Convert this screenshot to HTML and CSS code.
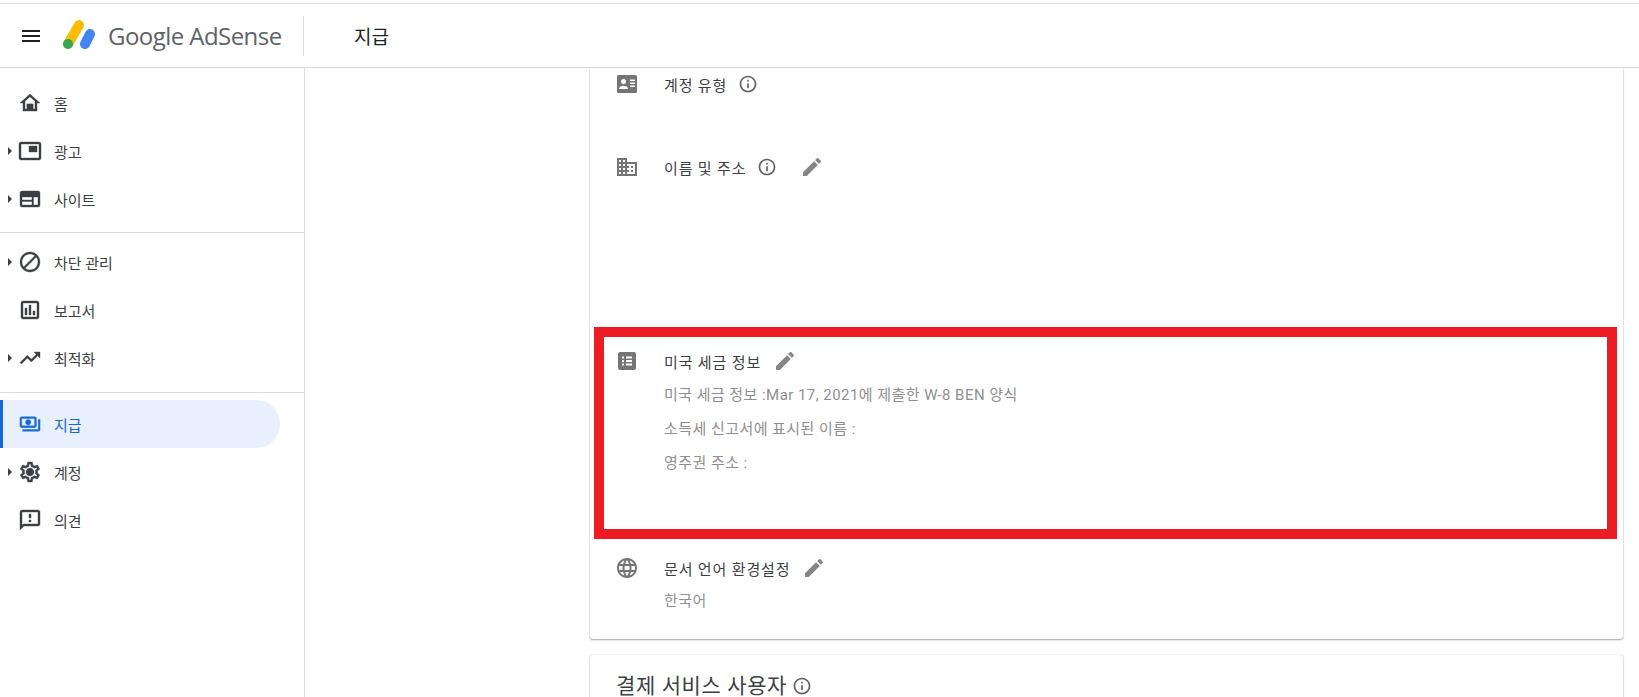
FILE: index.html
```html
<!DOCTYPE html><html lang="ko">
<head>
  <meta charset="UTF-8">
  <meta name="viewport" content="width=device-width, initial-scale=1.0">
  <title>지급 - Google AdSense</title>
  <link rel="stylesheet" href="styles.css">
</head>
<body>
  <header class="topbar">
    <svg class="menu" viewBox="0 0 18 12"><path d="M0 0h18v2H0zM0 5h18v2H0zM0 10h18v2H0z"/></svg>
    <svg class="logo" viewBox="0 0 32 29">
      <path d="M5 24L16 5" stroke="#fbbc04" stroke-width="10" stroke-linecap="round" fill="none"/>
      <path d="M22 24L27 14" stroke="#4285f4" stroke-width="10" stroke-linecap="round" fill="none"/>
      <circle cx="5" cy="24" r="5" fill="#34a853"/>
    </svg>
    <span class="brand">Google AdSense</span>
    <span class="page-title">지급</span>
  </header>

  <div class="layout">
    <nav class="sidebar">
      <div class="nav-group">
        <a class="nav-item"><svg viewBox="0 0 24 24"><path d="M12 5.69l5 4.5V18h-2v-5H9v5H7v-7.81l5-4.5M12 3L2 12h3v8h14v-8h3L12 3z"/><path d="M9 13h6v6H9z"/></svg>홈</a>
        <a class="nav-item has-caret"><svg viewBox="0 0 24 24"><path d="M19 7h-8v6h8V7zm2-4H3c-1.1 0-2 .9-2 2v14c0 1.1.9 1.98 2 1.98h18c1.1 0 2-.88 2-1.98V5c0-1.1-.9-2-2-2zm0 16.01H3V4.98h18v14.03z"/></svg>광고</a>
        <a class="nav-item has-caret"><svg viewBox="0 0 24 24"><path fill-rule="evenodd" d="M20 4H4a2 2 0 0 0-2 2v12a2 2 0 0 0 2 2h16a2 2 0 0 0 2-2V6a2 2 0 0 0-2-2zM4 10h10v3H4zm0 4.500h10V18H4zM15.500 10H20v8h-4.500z"/></svg>사이트</a>
      </div>
      <div class="nav-group">
        <a class="nav-item has-caret"><svg viewBox="0 0 24 24"><path d="M12 2C6.480 2 2 6.480 2 12s4.480 10 10 10 10-4.480 10-10S17.520 2 12 2zM4 12c0-4.420 3.580-8 8-8 1.850 0 3.550.63 4.900 1.690L5.690 16.900C4.630 15.550 4 13.850 4 12zm8 8c-1.850 0-3.550-.63-4.900-1.690L18.310 7.100C19.370 8.450 20 10.150 20 12c0 4.420-3.580 8-8 8z"/></svg>차단 관리</a>
        <a class="nav-item"><svg viewBox="0 0 24 24"><path d="M19 3H5c-1.100 0-2 .9-2 2v14c0 1.100.9 2 2 2h14c1.100 0 2-.9 2-2V5c0-1.100-.9-2-2-2zm0 16H5V5h14v14zM7 10h2v7H7zm4-3h2v10h-2zm4 6h2v4h-2z"/></svg>보고서</a>
        <a class="nav-item has-caret"><svg viewBox="0 0 24 24"><path d="M16 6l2.290 2.290-4.880 4.880-4-4L2 16.590 3.410 18l6-6 4 4 6.300-6.290L22 12V6z"/></svg>최적화</a>
      </div>
      <div class="nav-group last">
        <a class="nav-item active"><svg class="pay-icon" viewBox="0 0 24 24"><path d="M19 14V6c0-1.100-.9-2-2-2H3c-1.100 0-2 .9-2 2v8c0 1.100.9 2 2 2h14c1.100 0 2-.9 2-2zm-2 0H3V6h14v8zm-7-7c-1.660 0-3 1.340-3 3s1.340 3 3 3 3-1.340 3-3-1.340-3-3-3zm13 0v11c0 1.100-.9 2-2 2H4v-2h17V7h2z"/></svg>지급</a>
        <a class="nav-item has-caret"><svg viewBox="0 0 24 24"><path d="M19.430 12.980c.04-.32.07-.64.07-.98s-.03-.66-.07-.98l2.110-1.650c.19-.15.24-.42.12-.64l-2-3.460c-.12-.22-.39-.3-.61-.22l-2.490 1c-.52-.4-1.080-.73-1.690-.98l-.38-2.650C14.460 2.180 14.250 2 14 2h-4c-.25 0-.46.18-.49.42l-.38 2.650c-.61.25-1.170.59-1.690.98l-2.490-1c-.23-.09-.49 0-.61.22l-2 3.460c-.13.22-.07.49.12.64l2.110 1.650c-.04.32-.07.65-.07.98s.03.66.07.98l-2.110 1.650c-.19.15-.24.42-.12.64l2 3.460c.12.22.39.3.61.22l2.490-1c.52.4 1.080.73 1.690.98l.38 2.650c.03.24.24.42.49.42h4c.25 0 .46-.18.49-.42l.38-2.650c.61-.25 1.170-.59 1.690-.98l2.490 1c.23.09.49 0 .61-.22l2-3.460c.12-.22.07-.49-.12-.64l-2.110-1.650zm-1.980-1.710c.04.31.05.52.05.73 0 .21-.02.43-.05.73l-.14 1.130.89.7 1.080.84-.7 1.210-1.270-.51-1.040-.42-.9.68c-.43.32-.84.56-1.250.73l-1.060.43-.16 1.130-.2 1.350h-1.400l-.19-1.350-.16-1.130-1.060-.43c-.43-.18-.83-.41-1.230-.71l-.91-.7-1.060.43-1.270.51-.7-1.210 1.080-.84.89-.7-.14-1.130c-.03-.31-.05-.54-.05-.74s.02-.43.05-.73l.14-1.130-.89-.7-1.080-.84.7-1.210 1.270.51 1.040.42.9-.68c.43-.32.84-.56 1.250-.73l1.060-.43.16-1.130.2-1.350h1.390l.19 1.350.16 1.130 1.060.43c.43.18.83.41 1.230.71l.91.7 1.060-.43 1.270-.51.7 1.210-1.070.85-.89.7.14 1.130zM12 8c-2.210 0-4 1.790-4 4s1.790 4 4 4 4-1.790 4-4-1.790-4-4-4z"/></svg>계정</a>
        <a class="nav-item"><svg viewBox="0 0 24 24"><path d="M20 2H4c-1.100 0-1.990.9-1.990 2L2 22l4-4h14c1.100 0 2-.9 2-2V4c0-1.100-.9-2-2-2zm0 14H5.170L4 17.170V4h16v12zm-9-4h2v2h-2zm0-6h2v4h-2z"/></svg>의견</a>
      </div>
    </nav>

    <main class="content">
      <section class="card">
        <div class="row row-type">
          <svg class="row-icon" viewBox="0 0 24 24"><rect x="2" y="3" width="20" height="18" rx="1.500"/><circle cx="8.500" cy="9.500" r="2.500" fill="#fff"/><path d="M4 17c0-2.200 2.500-3.200 4.500-3.200S13 14.800 13 17z" fill="#fff"/><path d="M15 7.500h5V9h-5zM15 10.500h5V12h-5zM15 13.500h5V15h-5z" fill="#fff"/></svg>
          <div class="row-title">계정 유형
            <svg class="info-icon" viewBox="0 0 24 24"><path d="M11 7h2v2h-2zm0 4h2v6h-2zm1-9C6.480 2 2 6.480 2 12s4.480 10 10 10 10-4.480 10-10S17.520 2 12 2zm0 18c-4.410 0-8-3.590-8-8s3.590-8 8-8 8 3.590 8 8-3.590 8-8 8z"/></svg>
          </div>
        </div>
        <div class="row row-name">
          <svg class="row-icon" viewBox="0 0 24 24"><path d="M12 7V3H2v18h20V7H12zM6 19H4v-2h2v2zm0-4H4v-2h2v2zm0-4H4V9h2v2zm0-4H4V5h2v2zm4 12H8v-2h2v2zm0-4H8v-2h2v2zm0-4H8V9h2v2zm0-4H8V5h2v2zm10 12h-8v-2h2v-2h-2v-2h2v-2h-2V9h8v10zm-2-8h-2v2h2v-2zm0 4h-2v2h2v-2z"/></svg>
          <div class="row-title">이름 및 주소
            <svg class="info-icon" viewBox="0 0 24 24"><path d="M11 7h2v2h-2zm0 4h2v6h-2zm1-9C6.480 2 2 6.480 2 12s4.480 10 10 10 10-4.480 10-10S17.520 2 12 2zm0 18c-4.410 0-8-3.590-8-8s3.590-8 8-8 8 3.590 8 8-3.590 8-8 8z"/></svg>
            <svg class="edit-icon wide" viewBox="0 0 24 24"><path d="M3 17.250V21h3.750L17.810 9.940l-3.750-3.750L3 17.250zM20.710 7.040c.39-.39.39-1.020 0-1.410l-2.340-2.340c-.39-.39-1.020-.39-1.410 0l-1.830 1.830 3.750 3.750 1.830-1.830z"/></svg>
          </div>
        </div>
        <div class="row row-tax">
          <svg class="row-icon" viewBox="0 0 24 24"><rect x="3" y="3" width="18" height="18" rx="2"/><path d="M7 7.500h2v2H7zM11 7.500h6v2h-6zM7 11h2v2H7zM11 11h6v2h-6zM7 14.500h2v2H7zM11 14.500h6v2h-6z" fill="#fff"/></svg>
          <div class="row-body">
            <div class="row-title">미국 세금 정보
              <svg class="edit-icon" viewBox="0 0 24 24"><path d="M3 17.250V21h3.750L17.810 9.940l-3.750-3.750L3 17.250zM20.710 7.040c.39-.39.39-1.020 0-1.410l-2.340-2.340c-.39-.39-1.020-.39-1.410 0l-1.830 1.830 3.750 3.750 1.830-1.830z"/></svg>
            </div>
            <div class="row-sub first">미국 세금 정보 :Mar 17, 2021에 제출한 W-8 BEN 양식</div>
            <div class="row-sub">소득세 신고서에 표시된 이름 :</div>
            <div class="row-sub">영주권 주소 :</div>
          </div>
        </div>
        <div class="row row-lang">
          <svg class="row-icon" viewBox="0 0 24 24"><path d="M11.990 2C6.470 2 2 6.480 2 12s4.470 10 9.990 10C17.520 22 22 17.520 22 12S17.520 2 11.990 2zm6.930 6h-2.950c-.32-1.250-.78-2.450-1.380-3.560 1.840.63 3.370 1.910 4.330 3.560zM12 4.040c.83 1.200 1.480 2.530 1.910 3.960h-3.820c.43-1.430 1.080-2.760 1.910-3.960zM4.260 14C4.100 13.360 4 12.690 4 12s.1-1.360.26-2h3.380c-.08.66-.14 1.320-.14 2 0 .68.06 1.340.14 2H4.260zm.82 2h2.950c.32 1.250.78 2.450 1.380 3.560-1.840-.63-3.370-1.900-4.330-3.560zm2.950-8H5.080c.96-1.660 2.490-2.930 4.330-3.560C8.810 5.550 8.350 6.750 8.030 8zM12 19.960c-.83-1.200-1.480-2.530-1.910-3.960h3.820c-.43 1.430-1.080 2.760-1.910 3.960zM14.340 14H9.660c-.09-.66-.16-1.320-.16-2 0-.68.07-1.350.16-2h4.680c.09.65.16 1.320.16 2 0 .68-.07 1.340-.16 2zm.25 5.560c.6-1.110 1.060-2.310 1.380-3.560h2.950c-.96 1.650-2.490 2.930-4.330 3.560zM16.360 14c.08-.66.14-1.320.14-2 0-.68-.06-1.340-.14-2h3.380c.16.64.26 1.310.26 2s-.1 1.360-.26 2h-3.380z"/></svg>
          <div class="row-body">
            <div class="row-title">문서 언어 환경설정
              <svg class="edit-icon" viewBox="0 0 24 24"><path d="M3 17.250V21h3.750L17.810 9.940l-3.750-3.750L3 17.250zM20.710 7.040c.39-.39.39-1.020 0-1.410l-2.340-2.340c-.39-.39-1.020-.39-1.410 0l-1.830 1.830 3.750 3.750 1.830-1.830z"/></svg>
            </div>
            <div class="row-sub first">한국어</div>
          </div>
        </div>
      </section>
      <section class="card card-next">
        <h2>결제 서비스 사용자
          <svg class="info-icon" viewBox="0 0 24 24"><path d="M11 7h2v2h-2zm0 4h2v6h-2zm1-9C6.480 2 2 6.480 2 12s4.480 10 10 10 10-4.480 10-10S17.520 2 12 2zm0 18c-4.410 0-8-3.590-8-8s3.590-8 8-8 8 3.590 8 8-3.590 8-8 8z"/></svg>
        </h2>
      </section>
    </main>
  </div>
</body>
</html>
```

FILE: styles.css
```css
* {
  box-sizing: border-box;
}
html, body {
  height: 100%;
}
body {
  margin: 0;
  overflow: hidden;
  display: flex;
  flex-direction: column;
  background: #fff;
  color: #3c4043;
  font-family: Roboto, "Noto Sans CJK KR", sans-serif;
  font-size: 15px;
}

/* top bar */
.topbar {
  height: 65px;
  flex: none;
  margin-top: 3px;
  border-top: 1px solid #dedede;
  border-bottom: 1px solid #dadce0;
  display: flex;
  align-items: center;
  padding-left: 22px;
}
.menu {
  width: 18px;
  height: 12px;
  fill: #202124;
}
.logo {
  width: 32px;
  height: 29px;
  margin-left: 23px;
  margin-bottom: 3px;
}
.brand {
  margin-left: 13px;
  width: 196px;
  height: 40px;
  line-height: 40px;
  color: #5f6368;
  font-family: "Open Sans", sans-serif;
  font-size: 24px;
  letter-spacing: -0.55px;
  border-right: 1px solid #dadce0;
}
.page-title {
  margin-left: 50px;
  color: #202124;
  font-size: 19px;
}

.layout {
  flex: 1;
  display: flex;
  min-height: 0;
}

/* left nav */
.sidebar {
  width: 305px;
  flex: none;
  border-right: 1px solid #dadce0;
  padding-top: 11px;
}
.nav-group {
  padding-bottom: 9px;
  margin-bottom: 5px;
  border-bottom: 1px solid #dadce0;
}
.nav-group:nth-child(2) {
  padding-bottom: 10px;
  margin-bottom: 7px;
}
.nav-group.last {
  border-bottom: none;
}
.nav-item {
  height: 48px;
  width: 280px;
  display: flex;
  align-items: center;
  padding-left: 18px;
  color: #3c4043;
  font-size: 15px;
  position: relative;
  border-radius: 0 24px 24px 0;
}
.nav-item svg {
  width: 24px;
  height: 24px;
  margin-right: 12px;
  fill: #3c4043;
  stroke: #3c4043;
  stroke-width: 0.4;
  flex: none;
}
.nav-item svg.pay-icon {
  width: 22px;
  height: 22px;
  margin: 0 13px 0 1px;
}
.nav-item.has-caret::before {
  content: "";
  position: absolute;
  left: 8px;
  top: 20px;
  border-left: 4px solid #3c4043;
  border-top: 4px solid transparent;
  border-bottom: 4px solid transparent;
}
.nav-item.active {
  background: #e8f0fe;
  color: #1967d2;
  border-left: 3px solid #1967d2;
  padding-left: 15px;
}
.nav-item.active svg {
  fill: #1967d2;
  stroke: #1967d2;
}

/* cards */
.content {
  flex: 1;
  padding-left: 285px;
  padding-right: 16px;
  overflow: hidden;
}
.card {
  background: #fff;
  border-radius: 0 0 3px 3px;
  box-shadow: 0 1px 2px rgba(0,0,0,0.35), 0 0 1px rgba(0,0,0,0.25);
  clip-path: inset(0 -4px -4px -4px);
  padding: 4px 6px 21px 4px;
}
.row {
  display: flex;
  padding-left: 21px;
}
.row-icon {
  width: 24px;
  height: 24px;
  flex: none;
  fill: #757575;
  margin-right: 25px;
}
.row-title {
  height: 24px;
  display: flex;
  align-items: center;
  color: #3c4043;
  font-size: 15px;
  letter-spacing: 0.85px;
}
.row-sub {
  height: 34px;
  line-height: 34px;
  color: #8f8f8f;
  font-size: 15px;
  letter-spacing: 0.45px;
}
.row-sub.first {
  margin-top: 4px;
}
.info-icon {
  width: 20px;
  height: 20px;
  fill: #616161;
  margin-left: 11px;
}
.edit-icon {
  width: 24px;
  height: 24px;
  fill: #858585;
  margin-left: 12px;
}
.edit-icon.wide {
  margin-left: 23px;
}
.row-type {
  height: 83px;
}
.row-name {
  height: 172px;
}
.row-tax {
  height: 212px;
  padding: 12px 0 0 11px;
  border: 10px solid #ed1c24;
}
.row-tax .row-sub.first {
  margin-top: 5px;
}
.row-lang {
  margin-top: 17px;
}
.card-next {
  margin-top: 16px;
  height: 80px;
  border-radius: 3px 3px 0 0;
  padding: 19px 0 0 26px;
  clip-path: inset(-4px -4px 0 -4px);
}
h2 {
  margin: 0;
  display: flex;
  align-items: center;
  color: #3c4043;
  font-size: 21px;
  font-weight: 400;
  line-height: 24px;
  letter-spacing: 0.6px;
}
h2 .info-icon {
  margin-left: 5px;
}
```
